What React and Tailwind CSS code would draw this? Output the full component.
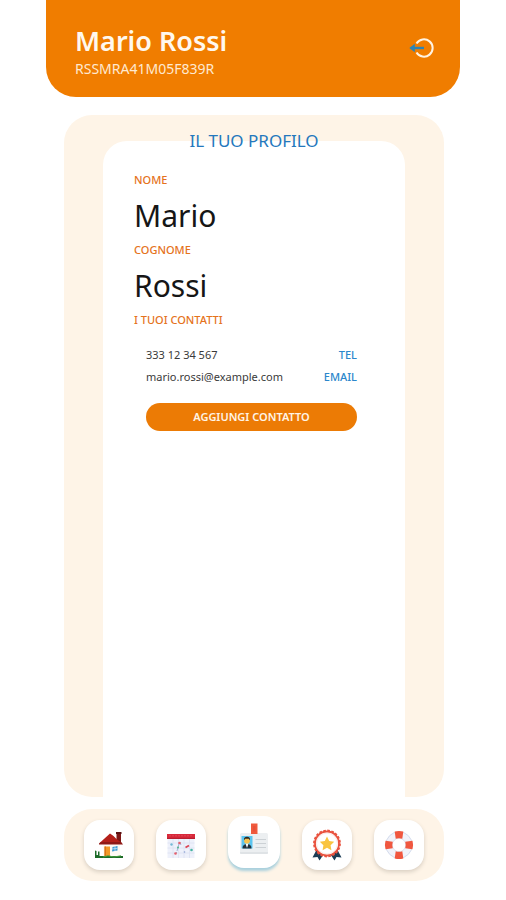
import { useState } from 'react'

const contacts = [
  { value: '333 12 34 567', type: 'TEL' },
  { value: 'mario.rossi@example.com', type: 'EMAIL' },
]

function LogoutIcon() {
  return (
    <svg viewBox="0 0 26 22" className="h-[22px] w-[26px]" fill="none" aria-hidden="true">
      <path d="M7.5 6.5A8.7 8.7 0 1 1 7.5 15.5" stroke="#fff3e2" strokeWidth="2" />
      <path d="M3 11H15" stroke="#2d84b5" strokeWidth="2.4" />
      <path d="M0.3 11L5.8 6.8V15.2Z" fill="#2d84b5" />
    </svg>
  )
}

function HouseIcon() {
  return (
    <svg viewBox="0 0 30 30" className="h-[30px] w-[30px]" aria-hidden="true">
      <path d="M9 12H26V26H9Z" fill="#fffaf4" />
      <path d="M22.5 2.5H27V13H22.5Z" fill="#7d1715" />
      <path d="M22 2H27.5V4H22Z" fill="#5c1212" />
      <path d="M5 13.5L16 3.5L19.5 6L22 8.5L28.5 13.5Z" fill="#b4201a" />
      <path d="M5 13.5L7 12H27L29 14.5H5Z" fill="#8f1a17" />
      <path d="M10.5 16.5H16V26H10.5Z" fill="#f39a28" />
      <path d="M10.5 16.5H12V26H10.5Z" fill="#d9761a" />
      <path d="M18.5 17L23.5 16V20.5L18 21.5Z" fill="#3d9bd4" />
      <path d="M21 16V21M18 19L23.5 18.3" stroke="#d8effa" strokeWidth="0.7" />
      <path d="M1 20.5L2.5 21V25H4V21.5H5.5V26H29V28H1Z" fill="#1d6b28" />
      <path d="M9 27L14 25.8L20 27L27 25.8" stroke="#45a03e" strokeWidth="1" fill="none" />
    </svg>
  )
}

function CalendarIcon() {
  return (
    <svg viewBox="0 0 30 30" className="h-[30px] w-[30px]" fill="none" aria-hidden="true">
      <path d="M1.5 8H28.5V28H1.5Z" fill="#eef1fb" />
      <path d="M1.5 13H28.5M1.5 18H28.5M1.5 23H28.5M7 8V28M12.5 8V28M18 8V28M23.5 8V28" stroke="#dce2f3" strokeWidth="0.8" />
      <path d="M1 4H29V9H1Z" fill="#d8293a" />
      <path d="M1 7.8H29V9H1Z" fill="#b91f31" />
      <path d="M3 5.8H27" stroke="#e4566a" strokeWidth="0.6" strokeDasharray="2 1" />
      <path d="M11 21L13.5 12L15 15M9 24L11 22" stroke="#a5b3d5" strokeWidth="1" />
      <circle cx="13.5" cy="13" r="1.3" fill="#e5606d" />
      <circle cx="9.5" cy="23.5" r="1.3" fill="#e5606d" />
      <path d="M19.5 17.5L23 15.5" stroke="#dc4354" strokeWidth="1.8" />
      <circle cx="5.5" cy="14.5" r="1.2" fill="#72b8d5" />
      <circle cx="25.5" cy="20" r="1.3" fill="#46b3a2" />
      <circle cx="12" cy="17.5" r="1" fill="#55b58d" />
      <circle cx="18.5" cy="22" r="0.8" fill="#8ca0d3" />
    </svg>
  )
}

function BadgeIcon() {
  return (
    <svg viewBox="0 0 30 34" className="h-[34px] w-[30px]" aria-hidden="true">
      <rect x="1" y="10" width="28" height="21" rx="1.5" fill="#eceff1" />
      <path d="M1 29H29V30Q29 31 28 31H2Q1 31 1 30Z" fill="#dfe3e6" />
      <rect x="12" y="0.5" width="6.5" height="10.5" fill="#f05a3d" />
      <path d="M14 3H16.5V8.5H14Z" fill="#e8503a" />
      <rect x="2.5" y="13" width="11" height="12.5" fill="#5cc5ef" />
      <path d="M3.5 25.5Q3.5 21 8 21T12.5 25.5Z" fill="#22323c" />
      <path d="M6.5 20.5H9.5L8 25Z" fill="#fff" />
      <circle cx="8" cy="17.7" r="2.9" fill="#f6c34f" />
      <path d="M5 17.3Q4.5 13.8 8 13.8T11 17.3L9.8 15.8H6.2Z" fill="#2f2720" />
      <path d="M16.5 16.5H27M16.5 20.5H27M16.5 24.5H27" stroke="#ccd1d5" strokeWidth="1" />
    </svg>
  )
}

function AwardIcon() {
  return (
    <svg viewBox="0 0 30 32" className="h-[32px] w-[30px]" aria-hidden="true">
      <path d="M5 20L0.5 28.5L5.5 28L7.5 31.5L12.5 24Z" fill="#1c3d55" />
      <path d="M25 20L29.5 28.5L24.5 28L22.5 31.5L17.5 24Z" fill="#1c3d55" />
      <circle cx="15" cy="14.5" r="12" fill="#fff" stroke="#e9523e" strokeWidth="1.8" />
      <circle cx="15" cy="14.5" r="13" fill="none" stroke="#e9523e" strokeWidth="1.8" strokeDasharray="2.6 1.48" />
      <circle cx="15" cy="14.5" r="10.4" fill="none" stroke="#f9dcd4" strokeWidth="0.6" />
      <path d="M15 7.4L17.2 12L22.2 12.7L18.6 16.2L19.4 21.2L15 18.8L10.6 21.2L11.4 16.2L7.8 12.7L12.8 12Z" fill="#f9c440" />
    </svg>
  )
}

function LifebuoyIcon() {
  return (
    <svg viewBox="0 0 30 30" className="h-[30px] w-[30px]" fill="none" aria-hidden="true">
      <circle cx="15" cy="15" r="10" stroke="#f1f3fa" strokeWidth="7" />
      <circle cx="15" cy="15" r="13.2" stroke="#cbd5e8" strokeWidth="0.8" />
      <circle cx="15" cy="15" r="6.7" stroke="#d9e0ed" strokeWidth="0.8" />
      <g fill="#f0573f">
        <path d="M10.7 1.5Q15 0.3 19.3 1.5L18.3 8.8Q15 7.7 11.7 8.8Z" />
        <path d="M10.7 28.5Q15 29.7 19.3 28.5L18.3 21.2Q15 22.3 11.7 21.2Z" />
        <path d="M1.5 10.7Q0.3 15 1.5 19.3L8.8 18.3Q7.7 15 8.8 11.7Z" />
        <path d="M28.5 10.7Q29.7 15 28.5 19.3L21.2 18.3Q22.3 15 21.2 11.7Z" />
      </g>
    </svg>
  )
}

const tabs = [
  { id: 'home', label: 'Home', Icon: HouseIcon },
  { id: 'calendario', label: 'Calendario', Icon: CalendarIcon },
  { id: 'profilo', label: 'Profilo', Icon: BadgeIcon },
  { id: 'premi', label: 'Premi', Icon: AwardIcon },
  { id: 'aiuto', label: 'Aiuto', Icon: LifebuoyIcon },
]

function Field({ label, value }) {
  return (
    <div>
      <dt className="text-[11px] leading-5 font-medium text-[#e5731c]">{label}</dt>
      <dd className="pt-0.5 text-[30px] leading-12 text-[#161616]">{value}</dd>
    </div>
  )
}

export default function App() {
  const [active, setActive] = useState('profilo')

  return (
    <div className="min-h-screen bg-white px-[46px] font-['Noto_Sans','Open_Sans',sans-serif]">
      <div className="mx-auto flex min-h-screen w-full max-w-md flex-col pb-[19px]">
        <header className="flex items-start justify-between rounded-b-[30px] bg-[#f07d00] pt-[23px] pr-[25px] pb-[18px] pl-[29px]">
          <div>
            <h1 className="text-[27px] leading-9 font-semibold text-[#fff8ee]">Mario Rossi</h1>
            <p className="text-sm leading-5 text-[#ffe9d0]">RSSMRA41M05F839R</p>
          </div>
          <button type="button" aria-label="Esci" className="mt-3.5">
            <LogoutIcon />
          </button>
        </header>

        <main className="mt-[18px] mr-4 ml-[18px] flex flex-1 flex-col rounded-[28px] bg-[#fef4e7] px-[39px] pt-3">
          <h2 className="z-10 text-center text-[17px] leading-7 text-[#2478bd]">IL TUO PROFILO</h2>
          <section className="-mt-[14px] flex-1 rounded-t-3xl bg-white pt-[29px] pr-9 pb-6 pl-[31px]">
            <dl>
              <Field label="NOME" value="Mario" />
              <Field label="COGNOME" value="Rossi" />
            </dl>
            <h3 className="text-[11px] leading-5 font-medium text-[#e5731c]">I TUOI CONTATTI</h3>

            <div className="mt-3.5 px-3">
              <ul>
                {contacts.map((c) => (
                  <li key={c.type} className="flex justify-between text-[11px] leading-[22px]">
                    <span className="text-[#3a3a3a]">{c.value}</span>
                    <span className="font-medium text-[#2b87cc]">{c.type}</span>
                  </li>
                ))}
              </ul>
              <button
                type="button"
                className="mt-[15px] h-7 w-full rounded-full bg-[#ec7b05] text-[11px] font-semibold text-[#fff4e6]"
              >
                AGGIUNGI CONTATTO
              </button>
            </div>
          </section>
        </main>

        <nav className="mt-3 mr-4 ml-[18px] flex items-center justify-between rounded-[28px] bg-[#fef4e7] px-5 py-2.5">
          {tabs.map(({ id, label, Icon }) => (
            <button
              key={id}
              type="button"
              aria-label={label}
              onClick={() => setActive(id)}
              className={
                active === id
                  ? 'flex size-[52px] -translate-y-[3px] items-center justify-center rounded-2xl bg-white pb-1 shadow-[0_3px_3px_#a9d0dd]'
                  : 'flex size-[50px] items-center justify-center rounded-2xl bg-white shadow-[0_2px_4px_#d9cfc2]'
              }
            >
              <Icon />
            </button>
          ))}
        </nav>
      </div>
    </div>
  )
}
